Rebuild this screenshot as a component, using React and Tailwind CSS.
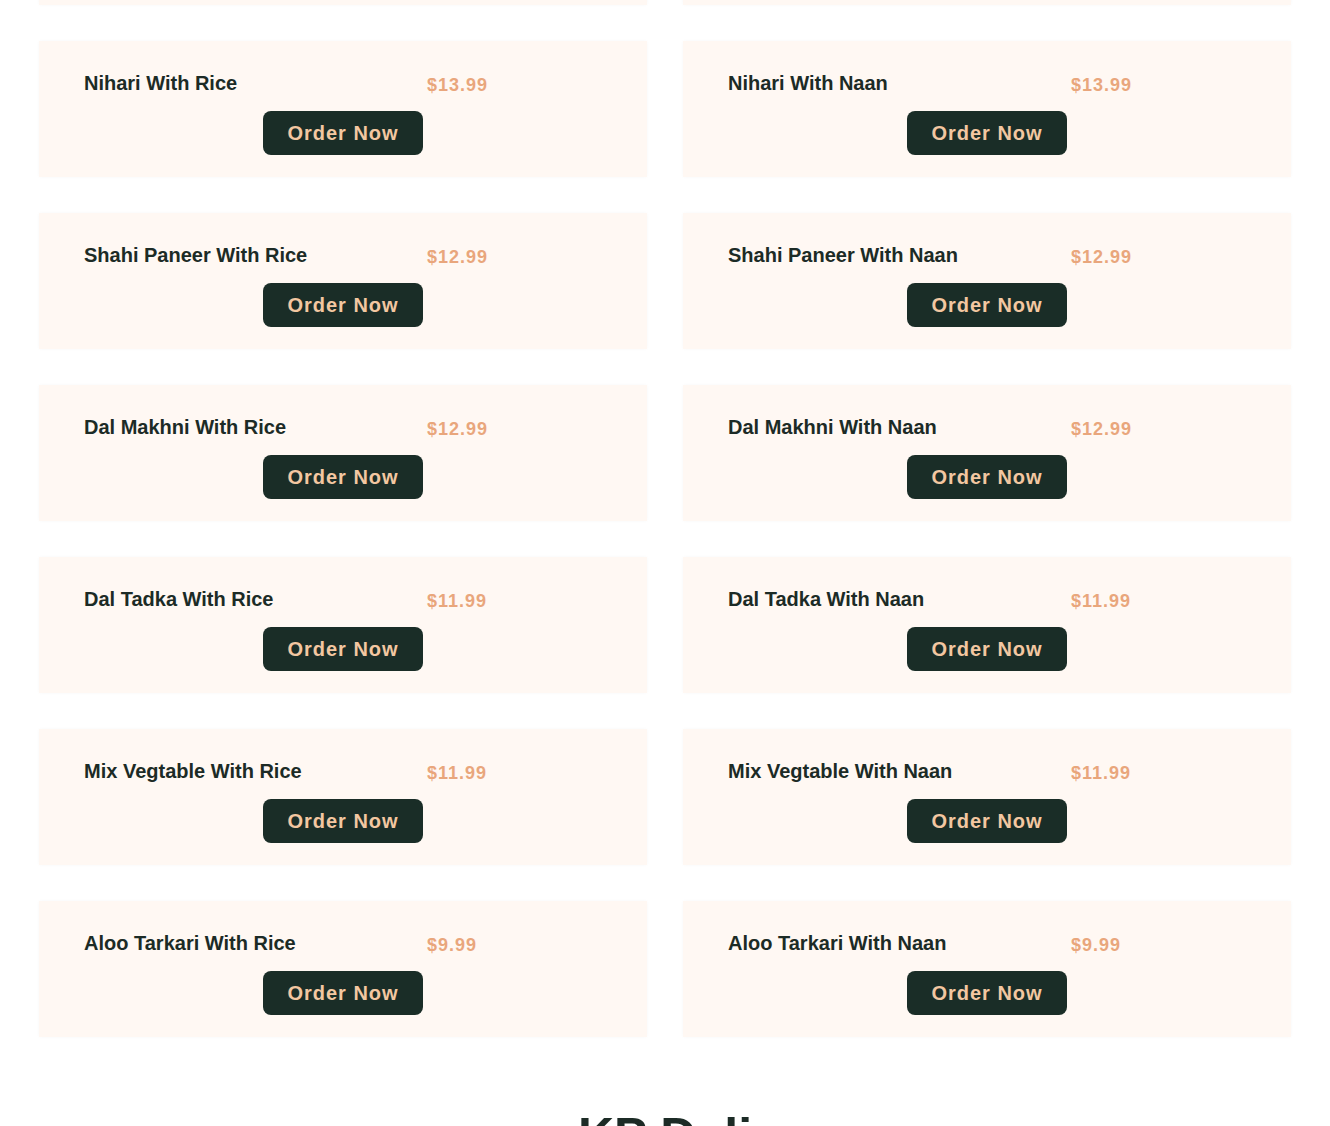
const dishes = [
  { name: "Chana Masala With Rice", price: "$11.99" },
  { name: "Chana Masala With Naan", price: "$11.99" },
  { name: "Nihari With Rice", price: "$13.99" },
  { name: "Nihari With Naan", price: "$13.99" },
  { name: "Shahi Paneer With Rice", price: "$12.99" },
  { name: "Shahi Paneer With Naan", price: "$12.99" },
  { name: "Dal Makhni With Rice", price: "$12.99" },
  { name: "Dal Makhni With Naan", price: "$12.99" },
  { name: "Dal Tadka With Rice", price: "$11.99" },
  { name: "Dal Tadka With Naan", price: "$11.99" },
  { name: "Mix Vegtable With Rice", price: "$11.99" },
  { name: "Mix Vegtable With Naan", price: "$11.99" },
  { name: "Aloo Tarkari With Rice", price: "$9.99" },
  { name: "Aloo Tarkari With Naan", price: "$9.99" },
];

const MenuCard = ({ name, price }) => {
  return (
    <div className="bg-[#fff8f3] shadow-[0_0_3px_rgba(0,0,0,0.03)] pt-[28px] pb-[22px] px-[45px] flex flex-col">
      <div className="flex items-center h-7">
        <h3 className="w-[343px] text-[20px] leading-7 font-bold text-[#1c2b26]">
          {name}
        </h3>
        <p className="text-[18px] leading-7 font-bold tracking-[1px] text-[#e9a67c] pt-[3px]">
          {price}
        </p>
      </div>
      <div className="flex justify-center mt-[14px]">
        <button className="bg-[#1a2d27] text-[#f3c7a1] text-[20px] leading-7 font-bold tracking-[1px] px-6 py-2 rounded-lg">
          Order Now
        </button>
      </div>
    </div>
  );
};

export default function App() {
  return (
    <main
      className="min-h-screen w-full bg-white overflow-hidden"
      style={{ fontFamily: '"Liberation Sans", Arial, sans-serif' }}
    >
      <div className="px-[39px] -mt-[131px]">
        <div className="grid grid-cols-2 gap-[36px]">
          {dishes.map((dish) => (
            <MenuCard key={dish.name} name={dish.name} price={dish.price} />
          ))}
        </div>
      </div>

      {/* next section heading, mostly below the fold */}
      <h2 className="mt-[74px] text-center text-[50px] leading-none font-bold text-[#1c2b26]">
        KP Deli
      </h2>
    </main>
  );
}
